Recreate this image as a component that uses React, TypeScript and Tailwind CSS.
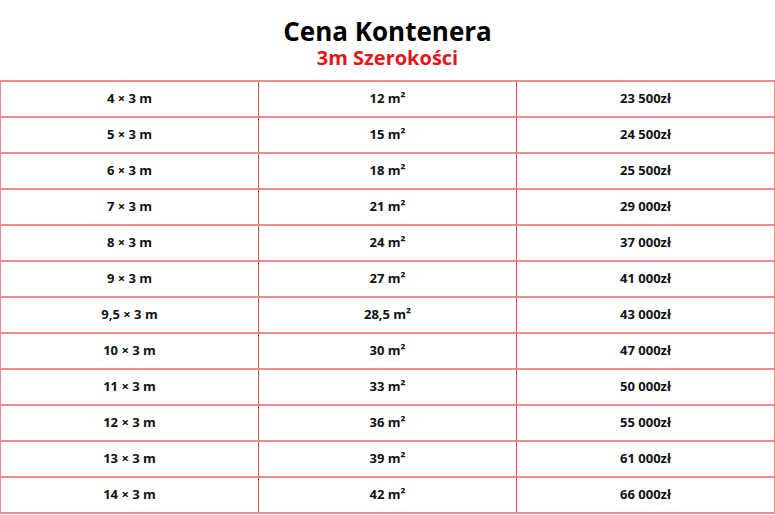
import React from 'react';

// Rows of the price table: size, area, price
const rows: Array<[string, string, string]> = [
  ['4 × 3 m', '12 m²', '23 500zł'],
  ['5 × 3 m', '15 m²', '24 500zł'],
  ['6 × 3 m', '18 m²', '25 500zł'],
  ['7 × 3 m', '21 m²', '29 000zł'],
  ['8 × 3 m', '24 m²', '37 000zł'],
  ['9 × 3 m', '27 m²', '41 000zł'],
  ['9,5 × 3 m', '28,5 m²', '43 000zł'],
  ['10 × 3 m', '30 m²', '47 000zł'],
  ['11 × 3 m', '33 m²', '50 000zł'],
  ['12 × 3 m', '36 m²', '55 000zł'],
  ['13 × 3 m', '39 m²', '61 000zł'],
  ['14 × 3 m', '42 m²', '66 000zł'],
];

export default function App() {
  return (
    <div className="w-[775px] h-[515px] bg-white font-['Open_Sans',sans-serif] overflow-hidden" data-name="Price Page">
      {/* Heading */}
      <div className="flex flex-col items-center pt-[16px] h-[80px]" data-name="Heading">
        <h1 className="text-[26px] leading-[30px] font-bold text-black">Cena Kontenera</h1>
        <h2 className="text-[20px] leading-[24px] font-bold text-[#e3161b]">3m Szerokości</h2>
      </div>

      {/* Table */}
      <div className="flex flex-col border-b-2 border-[#f08c8e]" data-name="Price Table">
        {rows.map((row, i) => (
          <div key={i} className="grid grid-cols-[258px_258px_259px] h-[36px] border-t-2 border-[#f08c8e]">
            {row.map((cell, j) => (
              <div
                key={j}
                className={`flex items-center justify-center border-l ${j === 0 ? 'border-[#f08c8e]' : 'border-[#e8474c]'} ${j === 2 ? 'border-r border-r-[#f08c8e]' : ''} text-[13px] font-bold text-[#111]`}
              >
                {cell}
              </div>
            ))}
          </div>
        ))}
      </div>
    </div>
  );
}
